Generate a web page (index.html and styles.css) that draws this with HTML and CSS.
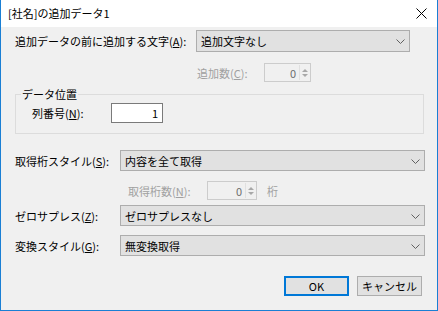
FILE: index.html
```html
<!DOCTYPE html>
<html lang="ja">
<head>
<meta charset="utf-8">
<title>[社名]の追加データ1</title>
<link rel="stylesheet" href="styles.css">
</head>
<body>
<div class="window">
  <div class="titlebar">
    <span class="title">[社名]の追加データ1</span>
    <svg class="close" width="11" height="11" viewBox="0 0 11 11"><path d="M0.5 0.5 L10.5 10.5 M10.5 0.5 L0.5 10.5" stroke="#000" stroke-width="1" fill="none"/></svg>
  </div>
  <div class="content">
    <div class="row row-a">
      <span class="label label-a">追加データの前に追加する文字(<u>A</u>):</span>
      <div class="combo combo-a"><span>追加文字なし</span><svg class="chev" width="9" height="5" viewBox="0 0 9 5"><path d="M0.5 0.5 L4.5 4.5 L8.5 0.5" stroke="#606060" fill="none"/></svg></div>
    </div>
    <div class="row row-c">
      <span class="label dis label-c">追加数(<u>C</u>):</span>
      <div class="spin spin-c"><span class="num">0</span><span class="arrows"><i class="up"></i><i class="down"></i></span></div>
    </div>
    <div class="group">
      <span class="legend">データ位置</span>
      <div class="group-row">
        <span class="label label-n">列番号(<u>N</u>):</span>
        <div class="textbox">1</div>
      </div>
    </div>
    <div class="row row-s">
      <span class="label label-wide">取得桁スタイル(<u>S</u>):</span>
      <div class="combo combo-wide"><span>内容を全て取得</span><svg class="chev" width="9" height="5" viewBox="0 0 9 5"><path d="M0.5 0.5 L4.5 4.5 L8.5 0.5" stroke="#606060" fill="none"/></svg></div>
    </div>
    <div class="row row-d">
      <span class="label dis label-d">取得桁数(<u>N</u>):</span>
      <div class="spin spin-d"><span class="num">0</span><span class="arrows"><i class="up"></i><i class="down"></i></span></div>
      <span class="label dis unit">桁</span>
    </div>
    <div class="row row-z">
      <span class="label label-wide">ゼロサプレス(<u>Z</u>):</span>
      <div class="combo combo-wide"><span>ゼロサプレスなし</span><svg class="chev" width="9" height="5" viewBox="0 0 9 5"><path d="M0.5 0.5 L4.5 4.5 L8.5 0.5" stroke="#606060" fill="none"/></svg></div>
    </div>
    <div class="row row-g">
      <span class="label label-wide">変換スタイル(<u>G</u>):</span>
      <div class="combo combo-wide"><span>無変換取得</span><svg class="chev" width="9" height="5" viewBox="0 0 9 5"><path d="M0.5 0.5 L4.5 4.5 L8.5 0.5" stroke="#606060" fill="none"/></svg></div>
    </div>
    <div class="buttons">
      <div class="btn btn-ok">OK</div>
      <div class="btn">キャンセル</div>
    </div>
  </div>
</div>
</body>
</html>
```
FILE: styles.css
```css
* { box-sizing: border-box; }
html, body { margin: 0; padding: 0; background: #ffffff; }
body {
  font-family: "Noto Sans CJK JP", "Noto Sans", sans-serif;
  font-size: 11px;
  color: #000;
}
u { text-decoration: underline; text-underline-offset: 1px; }
.window {
  width: 438px;
  height: 311px;
  border: 1px solid #1a7fd4;
  border-top: none;
  display: flex;
  flex-direction: column;
  background: #f0f0f0;
}
.titlebar {
  height: 27px;
  background: #ffffff;
  display: flex;
  align-items: center;
  justify-content: space-between;
  padding: 0 10px 2px 7px;
  flex: none;
}
.title { font-size: 11px; line-height: 14px; }
.close { display: block; margin-top: 1px; }
.content {
  flex: 1;
  display: flex;
  flex-direction: column;
  background: #f0f0f0;
}
.row {
  display: flex;
  align-items: center;
  padding-left: 14px;
}
.label { white-space: nowrap; line-height: 14px; }
.dis { color: #a0a0a0; }
.row-a { margin-top: 3px; height: 22px; }
.label-a { width: 181px; }
.combo {
  height: 100%;
  background: #e1e1e1;
  border: 1px solid #adadad;
  display: flex;
  align-items: center;
  justify-content: space-between;
  padding: 0 4px 0 4px;
}
.combo-a { width: 214px; }
.combo-wide { width: 305px; }
.chev { display: block; margin-top: 1px; }
.row-c { margin-top: 11px; height: 19px; padding-left: 196px; }
.label-c { width: 67px; }
.spin {
  height: 100%;
  background: #f0f0f0;
  border: 1px solid #cccccc;
  display: flex;
  align-items: stretch;
  justify-content: flex-end;
}
.spin-c { width: 47px; }
.spin-d { width: 50px; }
.num {
  color: #6d6d6d;
  display: flex;
  align-items: center;
  padding-right: 3px;
  line-height: 14px;
}
.arrows {
  width: 11px;
  display: flex;
  flex-direction: column;
  justify-content: center;
  align-items: center;
  gap: 2px;
  border-left: 1px solid #e0e0e0;
  margin: 1px 0;
}
.arrows i { display: block; width: 0; height: 0; border-left: 3px solid transparent; border-right: 3px solid transparent; }
.arrows .up { border-bottom: 3px solid #a8a8a8; }
.arrows .down { border-top: 3px solid #a8a8a8; }
.group {
  position: relative;
  margin: 12px 0 0 14px;
  width: 409px;
  height: 40px;
  border: 1px solid #dcdcdc;
  flex: none;
}
.legend {
  position: absolute;
  top: -8px;
  left: 5px;
  padding: 0 1px;
  background: #f0f0f0;
  line-height: 14px;
}
.group-row {
  display: flex;
  align-items: center;
  height: 20px;
  margin-top: 8px;
  padding-left: 16px;
}
.label-n { width: 79px; }
.textbox {
  width: 52px;
  height: 20px;
  background: #fff;
  border: 1px solid #7a7a7a;
  text-align: right;
  padding: 0 4px;
  line-height: 18px;
}
.row-s { margin-top: 16px; height: 21px; }
.label-wide { width: 105px; }
.row-d { margin-top: 10px; height: 19px; padding-left: 127px; }
.label-d { width: 79px; }
.unit { margin-left: 10px; }
.row-z { margin-top: 5px; height: 21px; }
.row-g { margin-top: 9px; height: 21px; }
.buttons {
  display: flex;
  justify-content: flex-end;
  gap: 8px;
  margin-top: 20px;
  padding-right: 15px;
  height: 20px;
}
.btn {
  width: 65px;
  height: 20px;
  background: #e1e1e1;
  border: 1px solid #adadad;
  display: flex;
  align-items: center;
  justify-content: center;
  line-height: 14px;
}
.btn-ok { border: 2px solid #0078d7; }
```
